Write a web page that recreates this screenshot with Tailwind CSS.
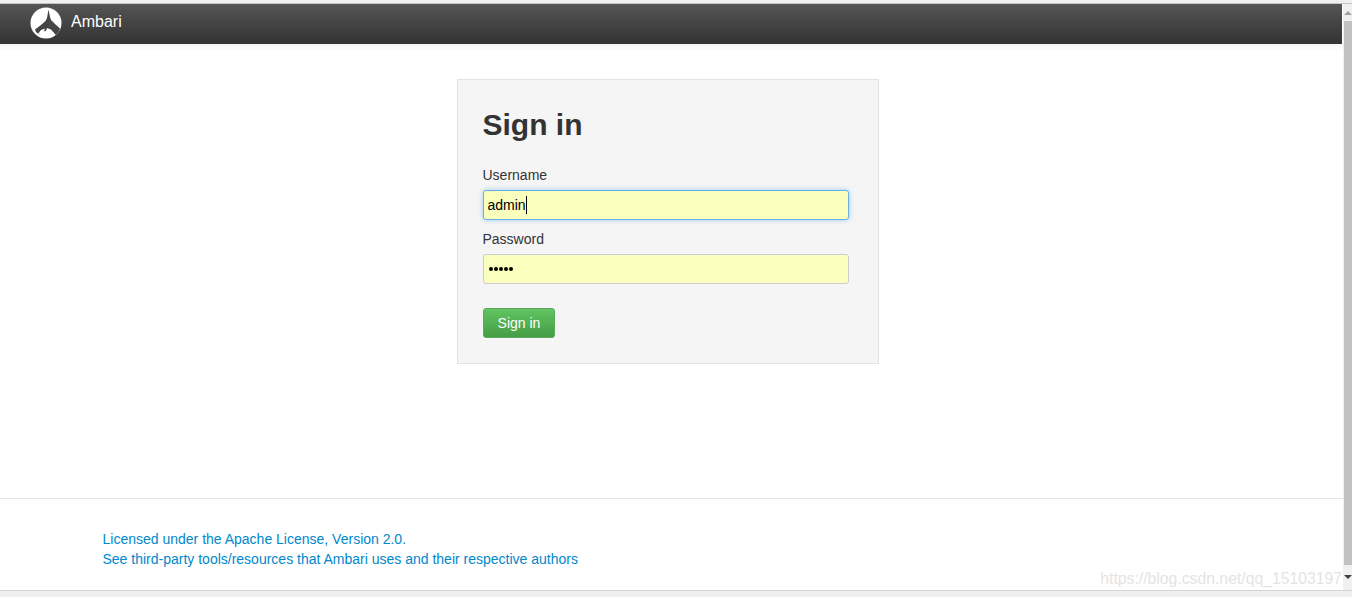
<!DOCTYPE html>
<html lang="en">

<head>
  <meta charset="UTF-8" />
  <title>Ambari</title>
  <script src="https://cdn.jsdelivr.net/npm/@tailwindcss/browser@4"></script>
</head>

<body class="h-[597px] overflow-hidden bg-white font-['Liberation_Sans',Arial,sans-serif] text-[14px] text-[#333]">
  <div class="h-[3px] bg-[#f0f0f0]"></div>
  <div class="h-px bg-[#c4c4c4]"></div>

  <div class="flex h-[586px]">
    <!-- page -->
    <div class="flex w-[1343px] flex-col">
      <nav class="mr-px flex h-10 items-center bg-gradient-to-b from-[#555555] to-[#333333] pl-[30px]">
        <svg class="h-8 w-8 -translate-y-[1px]" viewBox="0 0 32 32">
          <circle cx="16" cy="16" r="15.500" fill="#fff" />
          <path d="M18.500 2.500L20 10l1 3 4 4 5 4.500-1 3-3 3.500-3-3-5-1.500-5 1-3 3.500-4-3-1-2.500 6-4.500 4.500-4 1.500-3z" fill="#454545" />
          <path d="M8 27l3-4 4-1.500-1 2.500-3 4zM16 24l1-3 4 1.500 3 3.500-3 1zM13 28.500l3-2 4 1.500-3 2.500zM21 28l3-.5-2 2z" fill="#fff" />
        </svg>
        <span class="ml-[9px] -translate-y-[2px] text-[16px] text-white">Ambari</span>
      </nav>

      <main class="flex h-[454px] justify-center bg-gradient-to-b from-[#f4f4f4] from-0% to-white to-[1.500%] pt-[35px]">
        <form class="ml-[-8px] h-[285px] w-[422px] border border-[#e3e3e3] bg-[#f5f5f5] pt-6 pr-[29px] pl-[25px]">
          <h2 class="text-[30px] leading-[42px] font-bold text-[#333]">Sign in</h2>
          <label class="mt-[19px] block text-[14px] leading-5">Username</label>
          <div class="mt-[5px] flex h-[30px] items-center rounded-[3px] border border-[#66afe9] bg-[#fbffbd] pl-1 text-black shadow-[0_0_5px_rgba(102,175,233,0.6)]">
            <span>admin</span><span class="h-[18px] w-px bg-black"></span>
          </div>
          <label class="mt-[9px] block text-[14px] leading-5">Password</label>
          <div class="mt-[5px] flex h-[30px] items-center gap-px rounded-[3px] border border-[#ccc] bg-[#fbffbd] pl-[5px]">
            <span class="h-1 w-1 rounded-full bg-black"></span>
            <span class="h-1 w-1 rounded-full bg-black"></span>
            <span class="h-1 w-1 rounded-full bg-black"></span>
            <span class="h-1 w-1 rounded-full bg-black"></span>
            <span class="h-1 w-1 rounded-full bg-black"></span>
          </div>
          <button type="button" class="mt-6 h-[30px] w-[72px] rounded-[3px] border border-[#5aa85a] bg-gradient-to-b from-[#62c462] to-[#459d45] pl-px text-center text-white">Sign in</button>
        </form>
      </main>

      <footer class="h-[92px] border-t border-[#e5e5e5] pt-[30px] pl-[102.500px] text-[14px] leading-5 text-[#0088cc]">
        <a class="block" href="#">Licensed under the Apache License, Version 2.0.</a>
        <a class="block" href="#">See third-party tools/resources that Ambari uses and their respective authors</a>
      </footer>
    </div>

    <!-- scrollbar -->
    <div class="flex w-[9px] flex-col items-center bg-[#f0f0f0]">
      <div class="mt-[7px] ml-px h-0 w-0 border-x-[4px] border-b-[4px] border-x-transparent border-b-[#a0a0a0]"></div>
      <div class="mt-[6px] ml-px h-[544px] w-[8px] bg-[#c1c1c1]"></div>
      <div class="mt-[10px] ml-px h-0 w-0 border-x-[4px] border-t-[4px] border-x-transparent border-t-[#404040]"></div>
    </div>

    <!-- watermark -->
    <div class="absolute top-[569px] right-[10px] text-[15.750px] leading-5 text-[#e4e4e4]">https://blog.csdn.net/qq_15103197</div>
  </div>

  <div class="h-px bg-[#d4d4d4]"></div>
  <div class="h-[6px] bg-[#f0f0f0]"></div>
</body>

</html>
